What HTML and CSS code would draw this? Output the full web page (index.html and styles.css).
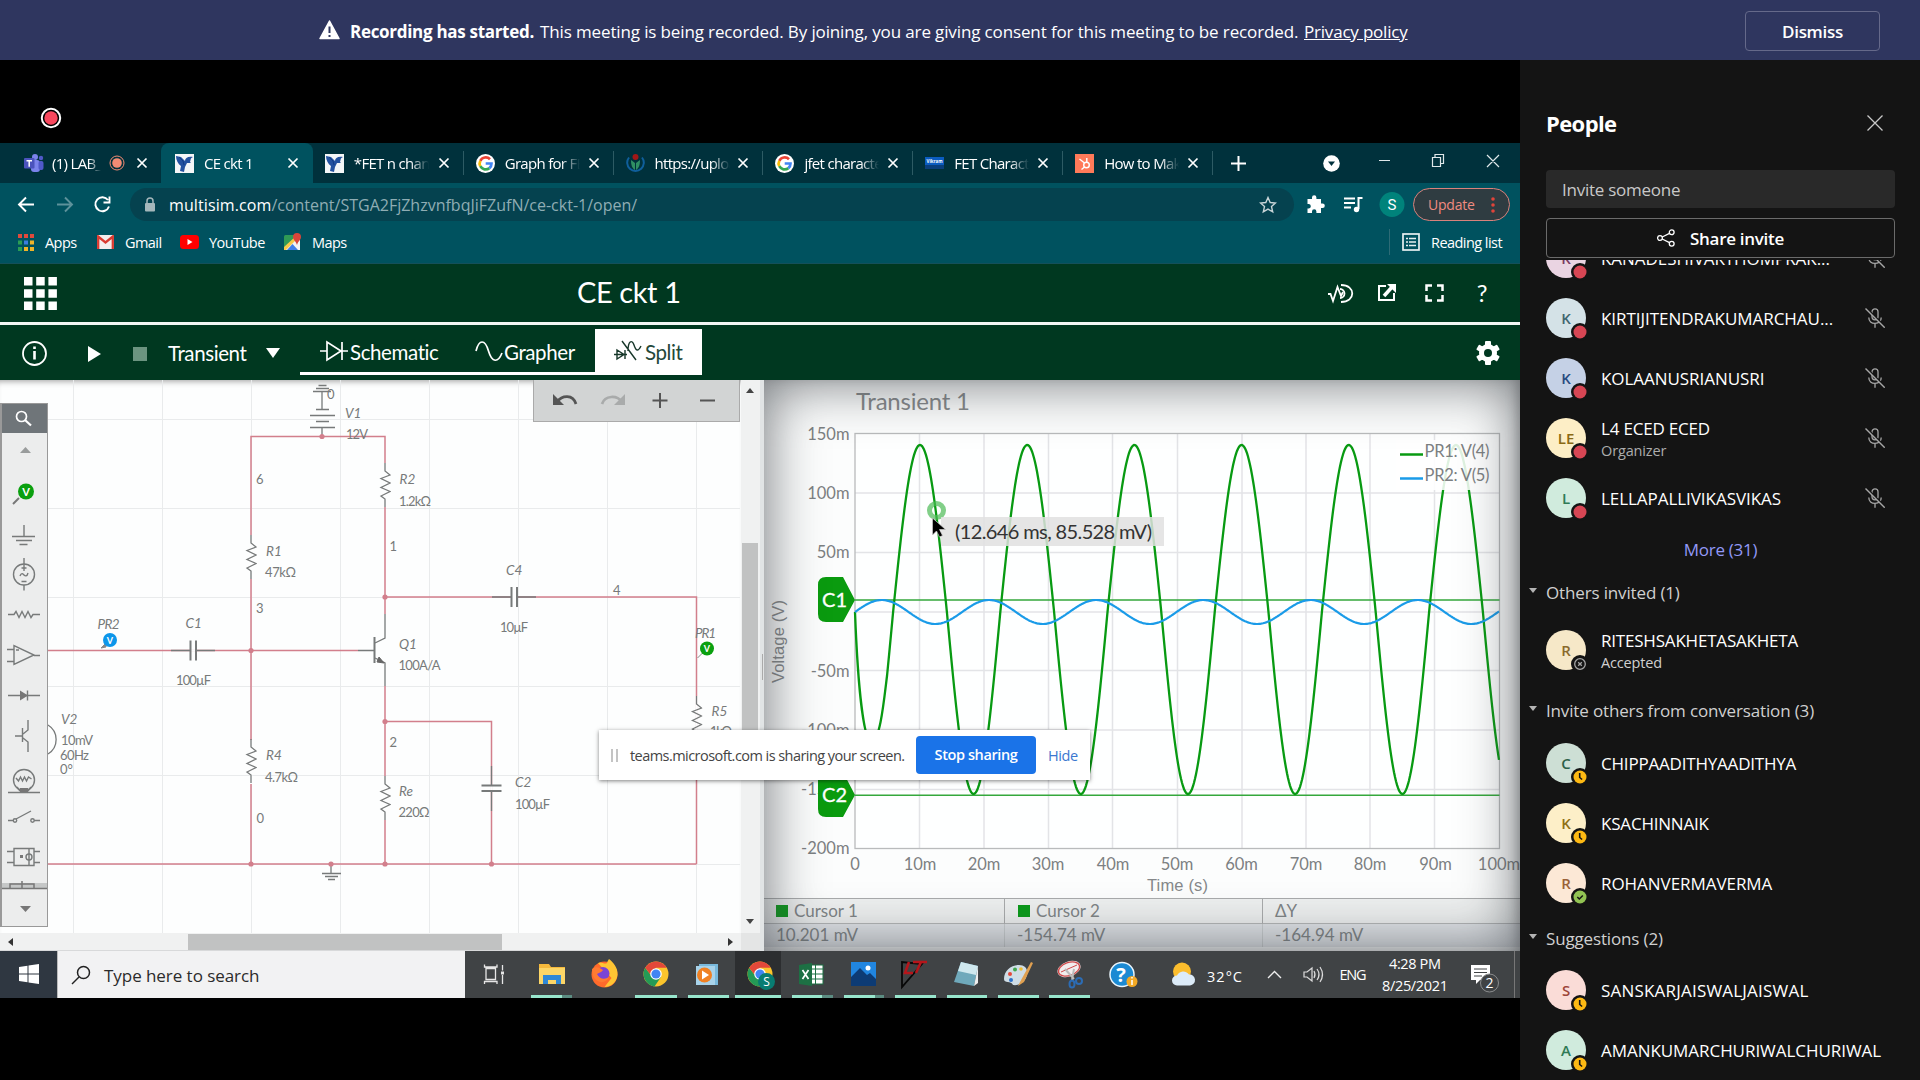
FILE: index.html
```html
<!DOCTYPE html>
<html lang="en">
<head>
<meta charset="utf-8">
<title>Meeting - LAB</title>
<link rel="stylesheet" href="styles.css">
</head>
<body>
<svg class="defs" width="0" height="0">
  <defs>
    <symbol id="mic" viewBox="0 0 20 20"><g fill="none" stroke="#a6a6a6" stroke-width="1.3"><rect x="7" y="0.8" width="6" height="11" rx="3"/><path d="M3.800 9.500c0 4 2.700 5.800 6.200 5.800s6.200-1.800 6.200-5.800M10 15.300v4.500"/></g><path d="M2 0.700L19.800 18.500" stroke="#141414" stroke-width="2"/><path d="M0.500 0.500L19.700 19.700" stroke="#a6a6a6" stroke-width="1.400"/></symbol>
    <symbol id="away" viewBox="0 0 18 18"><circle cx="9" cy="9" r="9" fill="#141414"/><circle cx="9" cy="9" r="6.500" fill="#fdb913"/><path d="M8.700 5v4.500l2.400 2" stroke="#141414" stroke-width="1.600" fill="none"/></symbol>
    <symbol id="free" viewBox="0 0 18 18"><circle cx="9" cy="9" r="9" fill="#141414"/><circle cx="9" cy="9" r="6.500" fill="#92c353"/><path d="M6.300 9l2 2 3.500-3.500" stroke="#141414" stroke-width="1.500" fill="none"/></symbol>
    <symbol id="busy" viewBox="0 0 18 18"><circle cx="9" cy="9" r="9" fill="#141414"/><circle cx="9" cy="9" r="6.500" fill="#d74654"/></symbol>
    <symbol id="offline" viewBox="0 0 18 18"><circle cx="9" cy="9" r="9" fill="#141414"/><circle cx="9" cy="9" r="5.300" fill="none" stroke="#a6a6a6" stroke-width="1.300"/><path d="M7.200 7.200l3.600 3.600M10.800 7.200l-3.600 3.600" stroke="#a6a6a6" stroke-width="1.300"/></symbol>
    <symbol id="x" viewBox="0 0 12 12"><path d="M1.500 1.500l9 9M10.500 1.500l-9 9" stroke="#fff" stroke-width="1.700"/></symbol>
    <symbol id="eagle" viewBox="0 0 19 19"><rect width="19" height="19" fill="#f4f7f8"/><path d="M1 2l5 1 4 4c0-3 3-5 8-4-3 1-2 3-3 5l1 1-4 0-2 4-1 5-4-1 1-5c-3-2-5-6-5-10z" fill="#2352a0"/><path d="M4 3l4 4 1 4" stroke="#123c86" fill="none"/></symbol>
    <symbol id="goog" viewBox="0 0 19 19"><circle cx="9.500" cy="9.500" r="9.500" fill="#fff"/><g fill="none" stroke-width="2.700"><path d="M14 5.300A6 6 0 0 0 4.300 6.800" stroke="#ea4335"/><path d="M4.300 6.800a6 6 0 0 0 0 5.400" stroke="#fbbc05"/><path d="M4.300 12.200a6 6 0 0 0 9.100 1.900" stroke="#34a853"/><path d="M13.400 14.100a6 6 0 0 0 2.100-4.600H9.700" stroke="#4285f4"/></g></symbol>
    <symbol id="chrome" viewBox="0 0 26 26"><circle cx="13" cy="13" r="12.500" fill="#fbc52c"/><path d="M13 13h-6L2.200 6.800A12.500 12.500 0 0 0 11.500 25.400L18 16z" fill="#249a56"/><path d="M2.200 6.800A12.500 12.500 0 0 1 23.800 6.800H13L7 13z" fill="#e2483a"/><circle cx="13" cy="13" r="5.800" fill="#fff"/><circle cx="13" cy="13" r="4.600" fill="#4285f4"/></symbol>
    <symbol id="res" viewBox="-6 -23 12 46"><path d="M0-22V-14L5-10-4-6.500 5-2-4 2.500 5 6.500-4 11 0 14V22" fill="none" stroke="#777a7a" stroke-width="1.300"/></symbol>
  </defs>
</svg>

<header class="banner">
  <div class="banner-msg">
    <svg width="21" height="20" viewBox="0 0 21 20"><path d="M10.500 1L20 18.500H1z" fill="#fff" stroke="#fff" stroke-width="1.500" stroke-linejoin="round"/><path d="M10.500 6.500v6.500M10.500 15v2" stroke="#2f365f" stroke-width="2"/></svg>
    <b class="b1">Recording has started.</b>
    <span class="b2">This meeting is being recorded. By joining, you are giving consent for this meeting to be recorded.</span>
    <a class="b3">Privacy policy</a>
  </div>
  <div class="dismiss">Dismiss</div>
</header>

<main class="stage">
  <section class="share">
    <div class="rec"><svg width="22" height="22"><circle cx="11" cy="11" r="9.200" fill="none" stroke="#fff" stroke-width="2"/><circle cx="11" cy="11" r="6.700" fill="#f8485e"/></svg></div>

    <div class="screen">
      <div class="tabs">
        <div class="tab t0"><svg width="20" height="20" viewBox="0 0 20 20"><circle cx="11" cy="4" r="3" fill="#7b83eb"/><circle cx="17" cy="5" r="2.200" fill="#5059c9"/><rect x="7" y="7" width="9" height="12" rx="3" fill="#7b83eb"/><rect x="14.500" y="8" width="5" height="9" rx="2" fill="#5059c9"/><rect y="5" width="10.500" height="10.500" rx="1" fill="#4b53bc"/><path d="M2.500 7.700h5.500M5.200 7.700v6" stroke="#fff" stroke-width="1.500"/></svg><span class="tt">(1) LAB_</span><svg class="dot" width="16" height="16"><circle cx="8" cy="8" r="7" fill="none" stroke="#f28b74"/><circle cx="8" cy="8" r="4.800" fill="#f28b74"/></svg><svg class="cl" width="12" height="12"><use href="#x"/></svg></div>
        <div class="tab on"><svg width="19" height="19"><use href="#eagle"/></svg><span class="tt">CE ckt 1</span><svg class="cl" width="12" height="12"><use href="#x"/></svg></div>
        <div class="tab"><svg width="19" height="19"><use href="#eagle"/></svg><span class="tt">*FET n chann</span><svg class="cl" width="12" height="12"><use href="#x"/></svg></div>
        <div class="tab sep"><svg width="19" height="19"><use href="#goog"/></svg><span class="tt">Graph for FET</span><svg class="cl" width="12" height="12"><use href="#x"/></svg></div>
        <div class="tab sep"><svg width="19" height="19" viewBox="0 0 19 19"><path d="M3 3.500a8.300 8.300 0 1 0 13 0" fill="none" stroke="#0f5f9c" stroke-width="2"/><circle cx="9.500" cy="3" r="3" fill="#a01717"/><path d="M5 6c0 5 1 8 4 10V9zM14 6c0 5-1 8-4 10V9z" fill="#2f8f63"/></svg><span class="tt">https://upload</span><svg class="cl" width="12" height="12"><use href="#x"/></svg></div>
        <div class="tab sep"><svg width="19" height="19"><use href="#goog"/></svg><span class="tt">jfet character</span><svg class="cl" width="12" height="12"><use href="#x"/></svg></div>
        <div class="tab sep"><svg width="19" height="19" viewBox="0 0 19 19"><rect y="3" width="19" height="8" fill="#0b5cc0"/><rect y="11" width="19" height="4" fill="#0a3f7c"/><text x="1.500" y="9" class="vik" textLength="16" lengthAdjust="spacingAndGlyphs">Vikram</text></svg><span class="tt">FET Character</span><svg class="cl" width="12" height="12"><use href="#x"/></svg></div>
        <div class="tab sep"><svg width="19" height="19" viewBox="0 0 19 19"><rect width="19" height="19" fill="#ff7a59"/><g fill="none" stroke="#fff" stroke-width="1.400"><circle cx="11.500" cy="11" r="2.800"/><path d="M11.800 4v4M4.500 5l5 4M9.500 13l-3 2.500"/></g></svg><span class="tt">How to Make</span><svg class="cl" width="12" height="12"><use href="#x"/></svg></div>
        <div class="tabend"></div>
        <svg class="winbtn" width="308" height="40" viewBox="1212 143 308 40"><path d="M1238.500 156v15M1231 163.500h15" stroke="#fff" stroke-width="2"/><circle cx="1331.500" cy="163.500" r="8.300" fill="#fff"/><path d="M1328 161.500h7l-3.500 4.500z" fill="#00313c"/><g fill="none" stroke="#dfe8ea" stroke-width="1.200"><path d="M1379 160.500h11M1432.500 157.500h8v9h-8zM1435 157.500v-3h8.500v9h-3M1487 155l12 12M1499 155l-12 12"/></g></svg>
      </div>
      <div class="navbar">
        <svg class="navic" width="118" height="34" viewBox="0 188 118 34"><g fill="none" stroke-width="1.900"><path d="M34 204.500H19M26 197.500l-7 7 7 7" stroke="#fff"/><path d="M57 204.500H72M65 197.500l7 7-7 7" stroke="#5d929b"/><path d="M108 200a7 7 0 1 0 1 6.500M109.500 196.500v6h-6" stroke="#fff"/></g></svg>
        <div class="omni"><svg width="12" height="16" viewBox="0 0 12 16"><rect x="1" y="6" width="10" height="8.500" rx="1" fill="#a5b7bb"/><path d="M3 6V4a3 3 0 0 1 6 0v2" stroke="#a5b7bb" stroke-width="1.500" fill="none"/></svg><span class="url"><i>multisim.com</i>/content/STGA2FjZhzvnfbqJiFZufN/ce-ckt-1/open/</span><svg class="star" width="18" height="18" viewBox="0 0 18 18"><path d="M9 1.500l2.200 5 5.300.5-4 3.600 1.200 5.300L9 13.100l-4.700 2.800 1.200-5.300-4-3.600 5.300-.5z" fill="none" stroke="#c9d5d8" stroke-width="1.400"/></svg></div>
        <svg class="ext" width="119" height="34" viewBox="1294 188 119 34"><path d="M1307.500 199h4.500v-1.500a2.200 2.200 0 0 1 4.400 0v1.500h4.600v4.500h1.500a2.300 2.300 0 0 1 0 4.600h-1.500v4.900h-4.600v-1.500a2.200 2.200 0 0 0-4.400 0v1.500h-4.500v-4.500h1.500a2.300 2.300 0 0 0 0-4.500h-1.500z" fill="#fff"/><path d="M1344 198.500h11M1344 203h11M1344 207.500h7M1358.500 209v-11h4" stroke="#fff" stroke-width="2" fill="none"/><circle cx="1356.500" cy="209.500" r="2.700" fill="#fff"/><circle cx="1392" cy="204.500" r="12.500" fill="#00837b"/><text x="1392" y="210" class="sav">S</text></svg>
        <div class="update"><span>Update</span><svg width="4" height="18"><circle cx="2" cy="3" r="1.800"/><circle cx="2" cy="9" r="1.800"/><circle cx="2" cy="15" r="1.800"/></svg></div>
      </div>
      <div class="marks">
        <div class="mk m1"><svg width="16" height="17" viewBox="0 0 16 17"><path d="M0 2h4M6 2h4M12 2h4" stroke="#e04a3c" stroke-width="4"/><path d="M0 8.500h4" stroke="#2c9d54" stroke-width="4"/><path d="M6 8.500h4" stroke="#3b7de0" stroke-width="4"/><path d="M12 8.500h4M6 15h4M12 15h4" stroke="#f0b429" stroke-width="4"/><path d="M0 15h4" stroke="#2c9d54" stroke-width="4"/></svg><span>Apps</span></div>
        <div class="mk m2"><svg width="17" height="14" viewBox="0 0 17 14"><rect width="17" height="14" rx="1" fill="#f3eded"/><path d="M1.200 14V1.500l7.300 6 7.300-6V14" fill="none" stroke="#d93a30" stroke-width="2.300"/></svg><span>Gmail</span></div>
        <div class="mk m3"><svg width="19" height="14" viewBox="0 0 19 14"><rect width="19" height="14" rx="3.500" fill="#f00"/><path d="M7.500 4v6l5-3z" fill="#fff"/></svg><span>YouTube</span></div>
        <div class="mk m4"><svg width="17" height="18" viewBox="0 0 17 18"><rect y="2" width="16" height="15" rx="1.500" fill="#2f9a55"/><path d="M0 17L13 4l3 3v10z" fill="#f3f3f3"/><path d="M3 17l5.500-6 5.500 6z" fill="#3f7fe8"/><path d="M0 14L12 3l2 2L2 17H0z" fill="#f7c948"/><path d="M13 0a4 4 0 0 1 4 4c0 3-3 4-4 8-1-4-4-5-4-8a4 4 0 0 1 4-4z" fill="#d9453a"/></svg><span>Maps</span></div>
        <div class="mk m5"><svg width="18" height="18" viewBox="0 0 18 18"><rect x="1" y="1" width="16" height="16" fill="none" stroke="#e8f0f1" stroke-width="1.700"/><path d="M4 5.500h2M7 5.500h7M4 9h2M7 9h7M4 12.500h2M7 12.500h7" stroke="#e8f0f1" stroke-width="1.600"/></svg><span>Reading list</span></div>
      </div>
      <div class="apphead">
        <svg class="waffle" width="33" height="33" viewBox="0 0 33 33"><path d="M0 4.300h33M0 16.500h33M0 28.700h33" stroke="#fff" stroke-width="8.500" stroke-dasharray="8.500 3.700"/></svg>
        <div class="apptitle">CE ckt 1</div>
        <svg class="appic" width="172" height="40" viewBox="1322 274 172 40"><g fill="none" stroke="#fff" stroke-width="2"><path d="M1328 295h2.500l2.500 7 4.500-14 3.500 9 2-4" stroke-width="1.800"/><path d="M1340 290a4.500 4.500 0 1 1 0 9M1341 286c15 0 15 17 0 17" stroke-width="1.800"/><path d="M1386 287h-7v14h15v-7"/><path d="M1384 297l9-10" stroke-width="3.500"/><path d="M1426.500 292v-5.500h5.500M1437 286.500h5.500v5.500M1442.500 296v5.500h-5.500M1432 301.500h-5.500V296" stroke-width="2.500"/></g><path d="M1387 285h9v9z" fill="#fff"/><text x="1482" y="303" class="qm">?</text></svg>
      </div>
      <div class="appbar">
        <svg class="run" width="150" height="54" viewBox="0 325 150 54"><circle cx="34.500" cy="352.500" r="11.500" fill="none" stroke="#fff" stroke-width="1.800"/><path d="M34.500 350v8.500M34.500 345.500v2.500" stroke="#fff" stroke-width="2.600"/><path d="M88 345l13 8-13 8z" fill="#fff"/><rect x="133" y="346" width="14" height="14" fill="#6b9480"/></svg>
        <span class="mode">Transient</span>
        <svg class="caret" width="14" height="10"><path d="M0 0h14L7 10z" fill="#fff"/></svg>
        <div class="views">
          <div class="view v1"><svg width="29" height="22" viewBox="0 0 29 22"><g fill="none" stroke="#fff" stroke-width="1.700"><path d="M0 11h7M7 2v18l14-9zM22 2v18M22 11h6"/></g></svg><span>Schematic</span></div>
          <div class="view v2"><svg width="28" height="22" viewBox="0 0 28 22"><path d="M1 11C4-1 10-1 13.500 11S23 23 27 13" fill="none" stroke="#fff" stroke-width="1.700"/></svg><span>Grapher</span></div>
          <div class="view v3"><svg width="30" height="24" viewBox="0 0 30 24"><g fill="none" stroke="#17372a" stroke-width="1.400"><path d="M8 2l14 19M0 15.500h13M3 11v9l7-4.500zM11 11v9M14 12c0-10 4-12 6-6s4 7 7 1"/></g></svg><span>Split</span></div>
        </div>
        <svg class="gear" width="26" height="26" viewBox="-13 -13 26 26"><g fill="#fff"><circle r="9"/><rect x="-3" y="-12" width="6" height="24" rx="1"/><rect x="-3" y="-12" width="6" height="24" rx="1" transform="rotate(60)"/><rect x="-3" y="-12" width="6" height="24" rx="1" transform="rotate(120)"/></g><circle r="4" fill="#003820"/></svg>
      </div>

      <div class="work">
        <div class="schem">
          <svg class="canvas" width="740" height="553" viewBox="0 380 740 553">
            <path d="M73.500 380v553M162.500 380v553M251.500 380v553M340.500 380v553M429.500 380v553M518.500 380v553M607.500 380v553M696.500 380v553M0 419.500h740M0 508.500h740M0 597.500h740M0 686.500h740M0 775.500h740M0 864.500h740" stroke="#e9ebec"/>
            <g fill="none" stroke="#d27f8c" stroke-width="1.500"><path d="M251 864V436.500H385V864M48 650.500H358M385 597H696.500V864M385 721.500H491.500V864M48 864H696.500"/></g>
            <g stroke="#fdfefe" stroke-width="2.500" fill="none"><path d="M251 535v44M251 740v44M385 463v44M385 776v44M696.500 696v44M385 614v72M191 650.500h5M512 597h5M491.500 786v5"/></g>
            <use href="#res" x="245" y="534" width="12" height="46"/><use href="#res" x="245" y="738" width="12" height="46"/><use href="#res" x="379" y="462" width="12" height="46"/><use href="#res" x="379" y="775" width="12" height="46"/><use href="#res" x="690.500" y="695" width="12" height="46"/>
            <g fill="none" stroke="#777a7a" stroke-width="1.300"><path d="M318.500 385.500h8M316 388.500h13M313 391.500h18M322 392v17M322 428v9"/><path d="M316 409.500h13M310 415.500h25M316 421.500h13M310 427.500h25" stroke-width="1.600"/><path d="M171 650.500h19M197 650.500h18M492 597h19M518 597h18M491.500 766v19M491.500 792v19M358 650.500h16M375 643l10-5v-24M375 658l10 5v23"/><path d="M331 864v9M322 873.500h19M325 876.500h13M328 879.500h7M48 725a17 17 0 0 1 0 29"/></g>
            <path d="M190.500 640.500v20M196 640.500v20M511.500 587v20M517 587v20M481.500 785.500h20M481.500 791h20M374.500 637v26" stroke="#777a7a" stroke-width="2"/>
            <path d="M384 663l-5-6-2 5z" fill="#666" stroke="#666"/>
            <g fill="#d27f8c"><circle cx="322" cy="436.500" r="2.600"/><circle cx="251" cy="650.500" r="2.600"/><circle cx="385" cy="597" r="2.600"/><circle cx="385" cy="721.500" r="2.600"/><circle cx="251" cy="864" r="2.600"/><circle cx="331" cy="864" r="2.600"/><circle cx="385" cy="864" r="2.600"/><circle cx="491.500" cy="864" r="2.600"/></g>
            <g class="val"><text x="327" y="399">0</text><text x="346" y="438.500" textLength="22">12V</text><text x="256" y="484">6</text><text x="256" y="612.500">3</text><text x="389.500" y="550.500">1</text><text x="389.500" y="746.500">2</text><text x="256.500" y="822.500">0</text><text x="613" y="595">4</text><text x="265" y="576.500" textLength="31">47kΩ</text><text x="265" y="781.500" textLength="33">4.7kΩ</text><text x="399" y="505.500" textLength="32">1.2kΩ</text><text x="398.500" y="669.500" textLength="42">100A/A</text><text x="398.500" y="817" textLength="31">220Ω</text><text x="515" y="808.500" textLength="35">100µF</text><text x="176" y="685" textLength="35">100µF</text><text x="500" y="632" textLength="28">10µF</text><text x="710" y="736" textLength="22">1kΩ</text><text x="61" y="745" textLength="32">10mV</text><text x="60" y="759.500" textLength="29">60Hz</text><text x="60" y="773.500">0°</text></g>
            <g class="val ref"><text x="345" y="417.500">V1</text><text x="266" y="555.500">R1</text><text x="399.500" y="484">R2</text><text x="266" y="760">R4</text><text x="399" y="796">Re</text><text x="711.500" y="715.500">R5</text><text x="399" y="649">Q1</text><text x="506" y="575">C4</text><text x="515" y="787">C2</text><text x="185.500" y="628">C1</text><text x="97.500" y="628.500" textLength="22">PR2</text><text x="695" y="637.500" textLength="21">PR1</text><text x="61" y="723.500">V2</text></g>
            <path d="M101 648l5-5v4zM697.500 658l5-5" stroke="#888" fill="#888"/><circle cx="110" cy="640" r="7" fill="#0c96ea"/><circle cx="707" cy="648.500" r="7" fill="#0aa00f"/><text x="110" y="643.500" class="pv">V</text><text x="707" y="652" class="pv">V</text>
          </svg>
          <div class="palette">
            <div class="psearch"><svg width="18" height="18" viewBox="0 0 18 18"><circle cx="6.500" cy="6.500" r="5" fill="none" stroke="#fff" stroke-width="1.700"/><path d="M10 10l6 5.500" stroke="#fff" stroke-width="2.200"/></svg></div>
            <svg width="45" height="493" viewBox="2 433 45 493"><g fill="#999c9c"><path d="M20 453h11l-5.500-6z"/></g><path d="M20 906h11l-5.500 6z" fill="#777"/><circle cx="26" cy="491.500" r="8" fill="#0aa00f"/><text x="26" y="495.500" class="pv2">V</text><path d="M13 504l6-6" stroke="#777" stroke-width="2"/>
            <g fill="none" stroke="#777a7a" stroke-width="1.400"><path d="M24 525v11M12 536.500h23M16 540.500h16M19.500 544.500h8"/><circle cx="24" cy="574.500" r="10.500"/><path d="M24 558v13M21.500 568h5M21.500 581.500h5M24 585v5.500M20 576c1.500-4 3-2 4-1s3 2 4-2"/><path d="M8 614.500h6l2-3 3 6 3-6 3 6 3-6 3 6 2-3h7"/><path d="M14 645.500v19l20-9.500zM7 649.500h7M7 661.500h7M34 655.500h6M16 650h3"/><path d="M8 695.500h32M27.500 690.500v10"/><path d="M28 720v10l-5 4M22.500 728v14M15 736h7M23 738l5 4v10"/><circle cx="24" cy="780" r="10.500"/><path d="M16 778l2.500 3 2-4 2 4 2-4 2 4 2-4 3 2M17 787l3 4M31 787l-3 4M8 792.500h32"/><path d="M8 820.500h6M16 819l15-8M34 820.500h6"/><circle cx="15" cy="820.500" r="1.700"/><circle cx="32.500" cy="820.500" r="1.700"/><path d="M14 848.500h20v17H14zM7 851.500h7M7 862.500h7M34 851.500h6M34 862.500h6M29 849v16"/><circle cx="29" cy="857" r="3"/></g><path d="M20 690.500v10l8-5zM20 788h8v4h-8zM20 855h3v3h-3z" fill="#777"/><path d="M2 883h45v6H2z" fill="#c5c7c7"/><path d="M2 888.500h45M10 889v-5h24v5M22 881v7" stroke="#777" stroke-width="1.500" fill="none"/></svg>
          </div>
          <div class="zoombar"><svg width="207" height="41" viewBox="533 380 207 41"><path d="M557 402c5-7 16-8 19 2" fill="none" stroke="#555" stroke-width="2.700"/><path d="M553 394v11h11z" fill="#555"/><path d="M602 404c3-9 15-9 20-2" fill="none" stroke="#a9abab" stroke-width="2.700"/><path d="M625 394v11h-11z" fill="#a9abab"/><path d="M652.500 400.500h15M660 393v15M700 400.500h15" stroke="#555" stroke-width="2"/></svg></div>
        </div>
        <div class="vbar"><i class="up"></i><b></b><i class="dn"></i></div>
        <div class="hbar"><i class="lf"></i><b></b><i class="rt"></i></div>
        <div class="corner"></div>
        <div class="split"></div>
        <div class="graph">
          <svg class="plot" width="756" height="518" viewBox="764 380 756 518">
            <text x="856" y="409.500" class="gt" textLength="114">Transient 1</text>
            <rect x="855" y="433.500" width="644.500" height="415" fill="#fff" fill-opacity=".7"/>
            <path d="M919.500 434v415M984 434v415M1048.500 434v415M1112.500 434v415M1177.500 434v415M1242 434v415M1306 434v415M1370 434v415M1434.500 434v415M855 493h644M855 552.500h644M855 612h644M855 670.500h644M855 730h644M855 789.500h644" stroke="#e3e4e7" stroke-width="1.500"/>
            <rect x="855" y="433.500" width="644.500" height="415" fill="none" stroke="#b9bbbc" stroke-width="1.300"/>
            <path d="M855 600h644.500M855 795.200h644.500" stroke="#35a83c" stroke-width="1.500"/>
            <path id="pr1" fill="none" stroke="#089a12" stroke-width="2.300"/>
            <path id="pr2" fill="none" stroke="#1a9be8" stroke-width="2.200"/>
            <rect x="1396" y="440" width="94" height="50" fill="#fff" fill-opacity=".87"/>
            <path d="M1400 454.500h23" stroke="#089a12" stroke-width="2.500"/><path d="M1400 478.500h23" stroke="#1a9be8" stroke-width="2.500"/>
            <g class="ax"><text x="1424.500" y="457" textLength="65">PR1: V(4)</text><text x="1424.500" y="481" textLength="65">PR2: V(5)</text></g>
            <g class="ax end"><text x="849.500" y="439.500">150m</text><text x="849.500" y="499">100m</text><text x="849.500" y="558">50m</text><text x="849.500" y="677">-50m</text><text x="849.500" y="736">-100m</text><text x="849.500" y="795">-150m</text><text x="849.500" y="853.500">-200m</text></g>
            <g class="ax mid"><text x="855" y="869.500">0</text><text x="920" y="869.500">10m</text><text x="984" y="869.500">20m</text><text x="1048" y="869.500">30m</text><text x="1113" y="869.500">40m</text><text x="1177" y="869.500">50m</text><text x="1241.500" y="869.500">60m</text><text x="1306" y="869.500">70m</text><text x="1370" y="869.500">80m</text><text x="1435.500" y="869.500">90m</text><text x="1499" y="869.500">100m</text></g>
            <text x="1147" y="891" class="ar" textLength="61">Time (s)</text>
            <text transform="translate(784 683) rotate(-90)" class="ar" textLength="83">Voltage (V)</text>
            <path d="M826 577h17l12 23-12 22h-17q-8 0-8-8v-29q0-8 8-8zM826 772h17l12 23-12 22h-17q-8 0-8-8v-29q0-8 8-8z" fill="#0a9b0f"/>
            <text x="834.500" y="606.500" class="ct">C1</text><text x="834.500" y="801.500" class="ct">C2</text>
            <circle cx="936.500" cy="510.500" r="7" fill="none" stroke="#4cba55" stroke-opacity=".7" stroke-width="5"/>
            <rect x="941" y="517" width="223" height="29" fill="#e0e0e0" fill-opacity=".85"/>
            <text x="955" y="539" class="tip" textLength="197">(12.646 ms, 85.528 mV)</text>
            <path d="M932.500 518v17l4-4 3 6 3-1.500-3-6h6z" fill="#000" stroke="#ccc" stroke-width=".7"/>
          </svg>
          <div class="cursors">
            <div class="cc h"><s class="s1"></s>Cursor 1</div><div class="cc h"><s></s>Cursor 2</div><div class="cc h">ΔY</div>
            <div class="cc">10.201 mV</div><div class="cc">-154.74 mV</div><div class="cc">-164.94 mV</div>
          </div>
          <div class="vignette"></div>
        </div>
        <div class="sharing"><span class="grip"></span><span class="sh1">teams.microsoft.com is sharing your screen.</span><span class="stop">Stop sharing</span><span class="hide">Hide</span></div>
      </div>

      <div class="taskbar">
        <div class="start"><svg width="20" height="20" viewBox="0 0 20 20"><path d="M0 3l8.500-1.200v7.700H0zM9.500 1.600L20 0v9.500H9.500zM0 10.500h8.500v7.700L0 17zM9.500 10.500H20V20L9.500 18.400z" fill="#fff"/></svg></div>
        <div class="search"><svg width="20" height="20" viewBox="0 0 20 20"><circle cx="12.500" cy="7.500" r="6" fill="none" stroke="#222" stroke-width="1.500"/><path d="M8 12l-7 7" stroke="#222" stroke-width="1.500"/></svg><span>Type here to search</span></div>
        <svg class="tb" width="1056" height="48" viewBox="464 950 1056 48">
          <rect x="735" y="951" width="46" height="47" fill="#2c2e30"/>
          <g fill="none" stroke="#e6e6e6" stroke-width="1.300"><path d="M486 968.500h9.500v11H486zM484.500 964.500v2.500h12.500v-2.500M484.500 984v-2.500h12.500v2.500M502.500 965v5.500M502.500 975v9"/></g><path d="M501 971.500h3v3h-3z" fill="#e6e6e6"/>
          <path d="M539 964h10l2 3h14v17h-26z" fill="#f5b93c"/><path d="M539 968h26v16h-26z" fill="#fcd667"/><path d="M543 984v-9h18v9h-5v-4h-8v4z" fill="#2f88d6"/>
          <circle cx="604.500" cy="974.500" r="13" fill="#ff6a2b"/><path d="M598 963c4-2 6 2 9 0 1-3 2-4 2-4 5 4 9 9 8.500 16-1 8-7 12-13 12l7-9z" fill="#ffc533"/><circle cx="603" cy="973.500" r="6.500" fill="#7a45d6"/><path d="M592 969c4-3 7-2 11 1-2 3-5 3-6 4 2 5 8 6 12 3-3 7-12 7-16-1z" fill="#ff7b32"/>
          <use href="#chrome" x="643" y="961" width="26" height="26"/>
          <rect x="699" y="964" width="19" height="21" fill="#78b9dc"/><rect x="696" y="966" width="19" height="19" fill="#a8d3ea"/><circle cx="704.500" cy="975" r="7.500" fill="#f08022"/><path d="M702 970.500v9l7-4.500z" fill="#fff"/>
          <use href="#chrome" x="747" y="961" width="26" height="26"/><circle cx="766.500" cy="981.500" r="8.500" fill="#087c72"/><text x="766.500" y="986" class="ts">S</text>
          <rect x="808" y="965" width="15" height="19" fill="#fff" stroke="#1d7044"/><path d="M808 969h15M808 974h15M808 979h15M815.500 965v19" stroke="#1d7044"/><path d="M799 965l13-2v23l-13-2z" fill="#1d7044"/><path d="M802.500 970l6 9M808.500 970l-6 9" stroke="#fff" stroke-width="1.700"/>
          <rect x="851" y="962" width="25" height="24" fill="#2186e0"/><path d="M851 986v-9l9-9 7 7 3-2 6 6v7z" fill="#0d3b74"/><circle cx="868" cy="968" r="2.500" fill="#fff"/>
          <path d="M902 962v25l20-23z" fill="none" stroke="#080808" stroke-width="1.800"/><path d="M909 962l-4 11h8M913 962h14M921 962l-5 11" stroke="#b5161b" stroke-width="2.600" fill="none"/>
          <path d="M961 962l17 4-4 20-20-4z" fill="#6fa9bb"/><path d="M961 962l17 4-2 9-18-4z" fill="#cfe8ee"/><path d="M974 986l4-3v-17z" fill="#eee"/>
          <path d="M1004 979c0-8 7-14 15-14 6 0 9 4 8 9-1 8-8 12-14 11-2-5-9-1-9-6z" fill="#cfdde6"/><circle cx="1010" cy="974" r="2" fill="#e5473a"/><circle cx="1015" cy="969.500" r="2" fill="#41a84e"/><circle cx="1011" cy="980" r="2" fill="#2d71c8"/><circle cx="1021" cy="969" r="1.800" fill="#efbe33"/><path d="M1031 962l-11 20-2 4 6-4 9-19z" fill="#e0a050"/>
          <ellipse cx="1069" cy="969" rx="12" ry="7.500" fill="#f2eeee" transform="rotate(-20 1069 969)"/><ellipse cx="1069" cy="969" rx="11" ry="6.500" fill="none" stroke="#cf4a4a" stroke-width="1.300" transform="rotate(-20 1069 969)"/><path d="M1061 972l16-7" stroke="#cf4a4a"/><path d="M1065 969l9 10M1074 969l-2 11" stroke="#bbb" stroke-width="2"/><g fill="none" stroke="#2c6cb4" stroke-width="2"><ellipse cx="1072" cy="984" rx="2.500" ry="3.500"/><ellipse cx="1079" cy="981" rx="3" ry="3"/></g>
          <circle cx="1122" cy="974.500" r="12" fill="#1b8ad3" stroke="#eaf6fd" stroke-width="1.500"/><text x="1121" y="982" class="q2">?</text><circle cx="1132" cy="981.500" r="5.500" fill="#f3a925"/><path d="M1132 980v5M1132 977v1.500" stroke="#fff" stroke-width="1.500"/>
          <circle cx="1182" cy="971.500" r="9" fill="#fbbd2d"/><path d="M1177 985.500a5 5 0 0 1 0-10 7 7 0 0 1 12-1 5.500 5.500 0 0 1 1 11z" fill="#dcebf8"/>
          <path d="M1268 978l6.500-6.500 6.500 6.500" fill="none" stroke="#eee" stroke-width="1.400"/><path d="M1304 972v5h3l5 4v-13l-5 4zM1314 971q2 3.500 0 7M1317 969q4 5.500 0 11M1320 967q5 7.500 0 15" fill="none" stroke="#ddd" stroke-width="1.200"/>
          <path d="M1471 965h19v15h-10l-4 4v-4h-5z" fill="#fff"/><path d="M1474 969h13M1474 972.500h13M1474 976h8" stroke="#3f4244"/><circle cx="1489.500" cy="983" r="9" fill="#3f4244" stroke="#8b8d8e"/><text x="1489.500" y="988" class="ts n2">2</text><path d="M1514.500 951v47" stroke="#777"/>
          <g class="tk"><text x="1207" y="981.500" textLength="35">32°C</text><text x="1339.500" y="980" textLength="27">ENG</text><text x="1389" y="969" textLength="52">4:28 PM</text><text x="1382" y="991" textLength="66">8/25/2021</text></g>
          <path d="M531 996.500h31M635 996.500h42M688 996.500h41M735 996.500h46M792 996.500h30M844 996.500h31M895 996.500h41M947 996.500h40M998 996.500h41M1049 996.500h41" stroke="#98e6cd" stroke-width="3"/><path d="M562 996.500h10M822 996.500h11M875 996.500h9" stroke="#5c8d82" stroke-width="3"/>
        </svg>
      </div>
    </div>
  </section>

  <aside class="people">
    <div class="phead"><h2>People</h2><svg width="16" height="16"><path d="M.5.500l15 15M15.500.500l-15 15" stroke="#c8c8c8" stroke-width="1.300"/></svg></div>
    <div class="invite">Invite someone</div>
    <div class="shareinv"><svg width="18" height="18" viewBox="0 0 18 18"><g fill="none" stroke="#fff" stroke-width="1.300"><circle cx="3" cy="9" r="2.400"/><circle cx="14.700" cy="3.300" r="2.400"/><circle cx="14.700" cy="14.700" r="2.400"/><path d="M5.200 8l7.300-3.600M5.200 10l7.300 3.600"/></g></svg>Share invite</div>
    <div class="list">
      <div class="row first"><div class="av" style="background:#ead4e2;color:#7a3b63">K<svg><use href="#busy"/></svg></div><div class="nm">KANADESHIVAKTHOMPRAK...</div><svg class="mic"><use href="#mic"/></svg></div>
      <div class="row"><div class="av" style="background:#d4e2e7;color:#3f6570">K<svg><use href="#busy"/></svg></div><div class="nm">KIRTIJITENDRAKUMARCHAU...</div><svg class="mic"><use href="#mic"/></svg></div>
      <div class="row"><div class="av" style="background:#c5d1e6;color:#284a80">K<svg><use href="#busy"/></svg></div><div class="nm">KOLAANUSRIANUSRI</div><svg class="mic"><use href="#mic"/></svg></div>
      <div class="row"><div class="av" style="background:#fdeec6;color:#8a6914">LE<svg><use href="#busy"/></svg></div><div class="nm two">L4 ECED ECED<small>Organizer</small></div><svg class="mic"><use href="#mic"/></svg></div>
      <div class="row"><div class="av" style="background:#d0ebdd;color:#2f7a55">L<svg><use href="#busy"/></svg></div><div class="nm">LELLAPALLIVIKASVIKAS</div><svg class="mic"><use href="#mic"/></svg></div>
      <div class="more">More (31)</div>
      <div class="sec">Others invited (1)</div>
      <div class="row r1"><div class="av" style="background:#f6e8c8;color:#8a6a2c">R<svg><use href="#offline"/></svg></div><div class="nm two">RITESHSAKHETASAKHETA<small class="acc">Accepted</small></div></div>
      <div class="sec s2">Invite others from conversation (3)</div>
      <div class="row"><div class="av" style="background:#cddfd5;color:#2c6048">C<svg><use href="#away"/></svg></div><div class="nm mid2">CHIPPAADITHYAADITHYA</div></div>
      <div class="row"><div class="av" style="background:#fdefc8;color:#8f7016">K<svg><use href="#away"/></svg></div><div class="nm mid2">KSACHINNAIK</div></div>
      <div class="row"><div class="av" style="background:#fce8d6;color:#9a6238">R<svg><use href="#free"/></svg></div><div class="nm">ROHANVERMAVERMA</div></div>
      <div class="sec s3">Suggestions (2)</div>
      <div class="row"><div class="av" style="background:#fadcd7;color:#9c4538">S<svg><use href="#away"/></svg></div><div class="nm wide">SANSKARJAISWALJAISWAL</div></div>
      <div class="row"><div class="av" style="background:#d0ebdd;color:#2f7a55">A<svg><use href="#away"/></svg></div><div class="nm">AMANKUMARCHURIWALCHURIWAL</div></div>
    </div>
  </aside>
</main>
<script src="script.js"></script>
</body>
</html>
```
FILE: styles.css
```css
* { box-sizing: border-box; }
body { margin: 0; width: 1920px; height: 1080px; overflow: hidden; background: #000; color: #fff; font-family: "Open Sans", "Noto Sans", sans-serif; }
.defs { position: absolute; }
svg { display: block; flex: none; }
i, s { font-style: normal; text-decoration: none; }

.banner { height: 60px; background: #2f365f; display: flex; align-items: center; justify-content: space-between; padding: 0 40px 0 319px; }
.banner-msg { display: flex; align-items: center; font-size: 17px; white-space: nowrap; padding-top: 3px; }
.banner-msg svg { margin: -4px 10px 0 0; }
.b1 { width: 190px; letter-spacing: -.3px; }
.b2 { width: 764px; letter-spacing: -.13px; }
.b3 { text-decoration: underline; letter-spacing: -.2px; }
.dismiss { width: 135px; height: 40px; margin-top: 1px; border: 1px solid #65698a; border-radius: 4px; text-align: center; font: 600 17px/40px "Open Sans", sans-serif; letter-spacing: -.3px; }

.stage { display: flex; height: 1020px; }
.share { width: 1520px; }
.rec { height: 83px; padding: 47px 0 0 40px; }
.screen { height: 855px; }

.tabs { height: 40px; background: #00313c; display: flex; font-size: 15px; }
.tab { width: 150px; height: 40px; padding: 0 13px 0 12px; display: flex; align-items: center; }
.tab.t0 { width: 161px; padding-left: 24px; }
.tab.on { width: 152px; padding-left: 14px; background: #00525f; border-radius: 8px 8px 0 0; }
.tab.sep { padding-left: 13px; background: linear-gradient(#2d5b64, #2d5b64) 0 50% / 1px 24px no-repeat; }
.tt { width: 75px; margin-left: 10px; overflow: hidden; white-space: nowrap; letter-spacing: -.7px; -webkit-mask: linear-gradient(90deg, #000 75%, transparent); mask: linear-gradient(90deg, #000 75%, transparent); }
.t0 .tt { width: 49px; margin-left: 8px; }
.dot { margin-left: 8px; }
.cl { margin-left: auto; }
.t0 .cl { margin-left: 11px; }
.on .cl { margin-right: 1px; }
.tabend { width: 1px; height: 24px; margin-top: 8px; background: #2d5b64; }
.winbtn { margin-left: -1px; }
.vik { font: bold 5px "Open Sans", sans-serif; fill: #fff; }

.navbar { height: 38px; background: #00525f; padding-top: 5px; display: flex; }
.omni { width: 1164px; margin-left: 12px; height: 33px; border-radius: 17px; background: #05424f; display: flex; align-items: center; padding: 0 17px 0 14px; }
.url { margin-left: 13px; font-size: 16px; color: #8fadb4; }
.url i { color: #fff; letter-spacing: .1px; }
.star { margin-left: auto; }
.sav { font: 15px Roboto, sans-serif; fill: #fff; text-anchor: middle; }
.update { width: 97px; height: 33px; border: 1.5px solid #d9827c; border-radius: 17px; background: #2f3c41; color: #f08b80; display: flex; align-items: center; padding-left: 14px; font-size: 14px; letter-spacing: -.2px; }
.update span { width: 63px; }
.update svg { fill: #e0443a; }

.marks { height: 43px; background: #00525f; display: flex; align-items: center; font-size: 14.500px; letter-spacing: -.55px; border-bottom: 1px solid #14505a; }
.mk { display: flex; align-items: center; gap: 11px; white-space: nowrap; }
.m1 { width: 79px; margin-left: 18px; }
.m2 { width: 83px; }
.m3 { width: 104px; gap: 10px; }
.m4 { width: 80px; }
.m5 { margin-left: auto; height: 26px; border-left: 1px solid #2d6b76; padding-left: 12px; width: 131px; }

.apphead { height: 61px; background: #003820; border-bottom: 3px solid #f2f7f4; display: flex; align-items: center; font-family: Lato, sans-serif; }
.waffle { margin-left: 24px; }
.apptitle { width: 1265px; padding: 0 0 3px 520px; font-size: 29px; line-height: 30px; letter-spacing: -.4px; white-space: nowrap; }
.qm { font: 24px Lato, sans-serif; fill: #fff; text-anchor: middle; }
.appbar { height: 55px; background: #003820; display: flex; align-items: center; font: 20.500px Lato, sans-serif; }
.mode { width: 98px; margin-left: 18px; letter-spacing: -.4px; }
.views { display: flex; height: 46px; margin: -1px 0 0 20px; }
.view { display: flex; align-items: center; border-bottom: 3px solid #fff; white-space: nowrap; letter-spacing: -.4px; }
.view span { padding-top: 2px; }
.v1 { width: 169px; padding-left: 20px; gap: 1px; }
.v2 { width: 126px; padding-left: 6px; gap: 1px; }
.v3 { width: 107px; padding-left: 19px; gap: 1px; background: #fff; color: #24483a; }
.gear { margin-left: auto; margin-right: 19px; }

.work { height: 571px; position: relative; background: #d8d9da; display: grid; grid-template: 553px 17px 1px / 741px 19px 4px 756px; }
.schem { position: relative; background: #fdfefe; overflow: hidden; box-shadow: inset 0 6px 6px -5px #999; }
.val { font: 13px Lato, sans-serif; fill: #777a7a; }
.ref { font-style: italic; font-size: 13.500px; }
.pv, .pv2 { font: bold 9px Lato, sans-serif; fill: #fff; text-anchor: middle; }
.pv2 { font-size: 11px; }
.palette { position: absolute; left: 0; top: 23px; width: 48px; height: 524px; background: #eceded; border: 1px solid #999; border-left-width: 2px; }
.psearch { height: 29px; background: #6f7579; display: flex; align-items: center; padding-left: 13px; }
.zoombar { position: absolute; left: 533px; top: 0; width: 207px; height: 42px; background: #d2d4d4; border: 1px solid #aaa; border-top: 0; }
.zoombar svg { margin-left: -1px; }
.vbar { background: #f0f1f1; display: flex; flex-direction: column; align-items: center; padding: 8px 2px 9px 1px; }
.vbar b { width: 16px; height: 217px; background: #c1c2c2; margin: 150px 0 auto; }
.up, .dn { border: 4.500px solid transparent; border-bottom: 5px solid #444; border-top: 0; }
.dn { border-bottom: 0; border-top: 5px solid #444; }
.hbar { grid-column: 1; grid-row: 2; background: #f0f1f1; display: flex; align-items: center; padding: 0 8px; }
.hbar b { width: 314px; height: 16px; background: #c1c2c2; margin: 0 auto 0 175px; }
.lf, .rt { border: 4.500px solid transparent; border-right: 5px solid #333; border-left: 0; }
.rt { border-right: 0; border-left: 5px solid #333; }
.corner { grid-column: 2; grid-row: 2; background: #e4e5e5; }
.split { grid-column: 3; grid-row: 1 / 4; background: linear-gradient(#aaa, #aaa) 2px 274px / 1px 26px no-repeat #e1e4e5; }
.graph { grid-column: 4; grid-row: 1 / 4; position: relative; background: #fcfdfd; overflow: hidden; }
.vignette { position: absolute; inset: 0; box-shadow: inset 0 0 55px 2px rgba(60, 65, 70, .72), inset -6px 0 12px -4px rgba(40, 40, 40, .35); }
.gt { font: 24px Lato, sans-serif; fill: #85888a; }
.ax { font: 16.500px Lato, sans-serif; fill: #7c8082; }
.end { text-anchor: end; }
.mid { text-anchor: middle; }
.ar { font: 16.500px "Liberation Sans", sans-serif; fill: #85888a; }
.ct { font: 20px Lato, sans-serif; fill: #fff; stroke: #fff; stroke-width: .3px; text-anchor: middle; }
.tip { font: 20px Lato, sans-serif; fill: #333; }
.cursors { display: grid; grid-template: 25px 23px / 241px 258px 257px; font: 17px/20px Lato, sans-serif; color: #7f8486; background: #eef0f0; border-top: 1px solid #a9abac; }
.cc { padding: 0 0 2px 12px; border-right: 1px solid #a9abac; display: flex; align-items: center; }
.cc:nth-child(n+4) { border-right-color: #ccd0d2; background: #e3e6ea; }
.cc.h { border-bottom: 1px solid #b5b7b8; padding-bottom: 0; }
.cc:nth-child(2) { padding-left: 13px; }
.cc:nth-child(3n) { border-right: 0; }
.cc s { width: 12px; height: 12px; background: #0a9b1a; margin-right: 6px; }
.sharing { position: absolute; left: 599px; top: 350px; width: 491px; height: 50px; background: #fff; box-shadow: 0 1px 4px rgba(0, 0, 0, .5); display: flex; align-items: center; color: #444; font-size: 14.500px; white-space: nowrap; letter-spacing: -.55px; }
.grip { width: 7px; height: 13px; margin: 0 12px; border: solid #c4c4c4; border-width: 0 2px; }
.sh1 { width: 286px; }
.stop { width: 120px; height: 38px; background: #1a73e8; border-radius: 4px; color: #fff; font-weight: 600; text-align: center; line-height: 37px; letter-spacing: -.4px; }
.hide { margin-left: 12px; color: #3b77d0; letter-spacing: -.4px; }

.taskbar { height: 47px; background: #404345; display: flex; }
.start { width: 57px; background: #2f3741; padding: 13px 0 0 19px; }
.search { width: 408px; background: #f2f2f3; border-left: 1px solid #bbb; color: #2b2b2b; font-size: 17px; letter-spacing: -.05px; display: flex; align-items: center; padding-left: 13px; gap: 13px; }
.search span { padding-top: 2px; }
.tb { margin: -1px 0 0 -1px; }
.tk { font: 14.500px "Open Sans", sans-serif; fill: #fff; }
.ts { font: 12px "Open Sans", sans-serif; fill: #fff; text-anchor: middle; }
.n2 { font-size: 14px; }
.q2 { font: bold 20px "Open Sans", sans-serif; fill: #fff; text-anchor: middle; }

.people { width: 400px; background: #141414; padding: 42px 25px 0 26px; height: 1020px; display: flex; flex-direction: column; }
.phead { height: 42px; display: flex; justify-content: space-between; align-items: center; padding-right: 12px; }
.phead h2 { margin: 0; font-size: 22px; letter-spacing: -.6px; }
.invite { height: 38px; margin-top: 26px; flex: none; border-radius: 4px; background: #292929; padding-left: 16px; line-height: 40px; font-size: 17px; color: #c8c8c8; letter-spacing: -.25px; }
.shareinv { height: 40px; flex: none; margin-top: 10px; border: 1px solid #6b6b6b; border-radius: 4px; display: flex; align-items: center; justify-content: center; gap: 15px; font-size: 17px; font-weight: 600; letter-spacing: -.3px; }
.list { flex: 1; margin: 2px -25px 0 -26px; padding: 0 25px 0 26px; overflow: hidden; }
.row { height: 60px; display: flex; align-items: center; }
.row.first { margin-top: -32px; }
.av { width: 40px; height: 40px; border-radius: 50%; position: relative; font-size: 15px; font-weight: 600; line-height: 40px; text-align: center; }
.av svg { position: absolute; width: 18px; height: 18px; left: 25px; top: 25px; }
.nm { margin-left: 15px; padding-top: 2px; font-size: 17px; line-height: 22px; letter-spacing: -.05px; white-space: nowrap; }
.nm.two, .nm.mid2 { letter-spacing: -.2px; }
.nm.wide { letter-spacing: .2px; }
.nm.two { padding-top: 3px; }
.nm small { display: block; font-size: 14.500px; color: #adadad; letter-spacing: -.15px; }
.nm small.acc { color: #d0d0d0; }
.mic { width: 20px; height: 20px; margin: 0 10px 0 auto; }
.more { height: 44px; line-height: 44px; text-align: center; color: #9299f7; font-size: 17px; letter-spacing: -.25px; }
.sec { height: 40px; line-height: 41px; font-size: 17px; color: #d0d0d0; letter-spacing: -.15px; position: relative; white-space: nowrap; }
.sec::before { content: ""; position: absolute; left: -17px; top: 16px; border: 4px solid transparent; border-top: 5px solid #b4b4b4; border-bottom: 0; }
.r1 { margin-top: 8px; }
.s2 { margin-top: 10px; margin-bottom: 3px; }
.s3 { margin: 5px 0 2px; }
```
FILE: script.js
```js
// Plot area: time axis starts at x=855, one 60 Hz period spans 107.2px.
const period = 107.2, start = 855, end = 1499.5, w = 2 * Math.PI / period;

// Amplifier output: start-up transient, then a steady slightly asymmetric sine.
let out = `M${start} 612C858 690 864 742 871.500 742C880 742 884 700 887 676`;
for (let x = 888; x <= end; x += 1) {
  const c = Math.cos(w * (x - 920));
  out += `L${x} ${(611 - (c > 0 ? 166 : 183) * c).toFixed(1)}`;
}
document.getElementById('pr1').setAttribute('d', out);

// Amplifier input.
let inp = `M${start} 612`;
for (let x = start; x <= end; x += 1) {
  inp += `L${x} ${(612 - 12 * Math.sin(w * (x - start))).toFixed(1)}`;
}
document.getElementById('pr2').setAttribute('d', inp);
```
